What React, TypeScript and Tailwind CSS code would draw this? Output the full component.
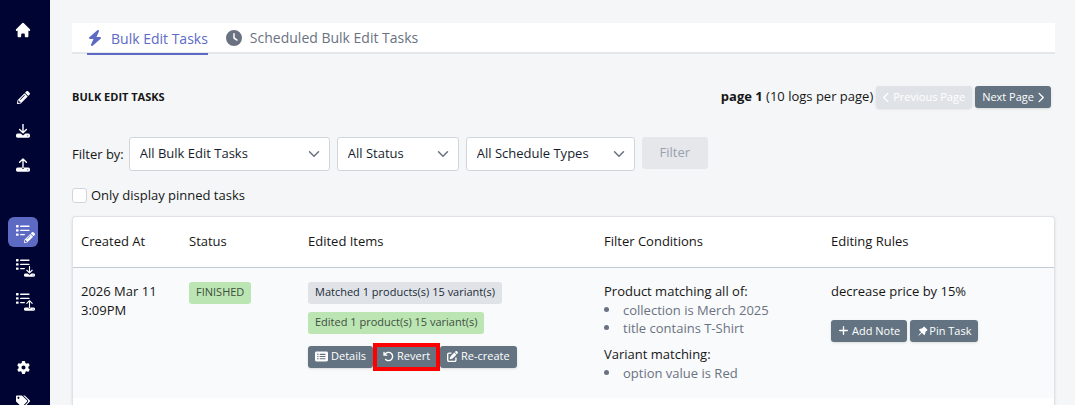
import React from "react";
import clsx from "clsx";
import { FaPencilAlt, FaTags } from "react-icons/fa";
import {
  FaArrowRotateLeft,
  FaBolt,
  FaChevronLeft,
  FaChevronRight,
  FaClock,
  FaGear,
  FaPenToSquare,
  FaPlus,
  FaRectangleList,
} from "react-icons/fa6";
import { HiHome } from "react-icons/hi";
import { AiFillPushpin } from "react-icons/ai";
import { ChevronDown } from "lucide-react";

// arrow over a tray, used for both export (down) and import (up)
function TrayIcon({ up, className }: { up?: boolean; className?: string }) {
  return (
    <svg viewBox="0 0 14 14" className={className} fill="none" stroke="currentColor" aria-hidden="true">
      <path
        d={up ? "M7 10V1M3.6 4.2L7 .9l3.4 3.3" : "M7 .4v8.2M3.6 5.4L7 8.7l3.4-3.3"}
        strokeWidth="1.4"
        strokeLinecap="round"
        strokeLinejoin="round"
      />
      <path
        d={
          up
            ? "M2 9.6h4v1.4h2V9.6h4a2.1 2.1 0 0 1 0 4.2H2a2.1 2.1 0 0 1 0-4.2z"
            : "M2 9.6h2.6L7 11.4l2.4-1.8H12a2.1 2.1 0 0 1 0 4.2H2a2.1 2.1 0 0 1 0-4.2z"
        }
        fill="currentColor"
        stroke="none"
      />
      <circle cx="11.6" cy="11.7" r="0.8" fill="#8589b0" stroke="none" />
    </svg>
  );
}

// task list with a small action icon on its lower right corner
function ListBadgeIcon({ children }: { children: React.ReactNode }) {
  return (
    <span className="relative block size-[14px]">
      <svg viewBox="0 0 14 14" className="size-[14px]" fill="currentColor" aria-hidden="true">
        <rect x="0" y="0" width="2.6" height="2.4" rx="0.6" />
        <rect x="0" y="4.2" width="2.6" height="2.4" rx="0.6" />
        <rect x="0" y="8.4" width="2.6" height="2.4" rx="0.6" />
        <rect x="4" y="0.5" width="9.6" height="1.4" rx="0.7" />
        <rect x="4" y="4.7" width="9.6" height="1.4" rx="0.7" />
        <rect x="4" y="8.9" width="5" height="1.4" rx="0.7" />
      </svg>
      <span className="absolute top-[7px] left-2">{children}</span>
    </span>
  );
}

interface NavItem {
  label: string;
  icon: React.ReactNode;
  active?: boolean;
}

const navGroups: NavItem[][] = [
  [{ label: "Home", icon: <HiHome className="size-[18px]" /> }],
  [
    { label: "Bulk edit", icon: <FaPencilAlt className="size-[13px]" /> },
    { label: "Export", icon: <TrayIcon className="size-[14px]" /> },
    { label: "Import", icon: <TrayIcon up className="size-[14px]" /> },
  ],
  [
    {
      label: "Bulk edit tasks",
      icon: (
        <ListBadgeIcon>
          <FaPencilAlt className="size-[11px]" />
        </ListBadgeIcon>
      ),
      active: true,
    },
    {
      label: "Export tasks",
      icon: (
        <ListBadgeIcon>
          <TrayIcon className="size-[11px]" />
        </ListBadgeIcon>
      ),
    },
    {
      label: "Import tasks",
      icon: (
        <ListBadgeIcon>
          <TrayIcon up className="size-[11px]" />
        </ListBadgeIcon>
      ),
    },
  ],
  [
    { label: "Settings", icon: <FaGear className="size-[13px]" /> },
    { label: "Plans", icon: <FaTags className="size-[14px]" /> },
  ],
];

function Sidebar() {
  return (
    <nav className="flex w-[50px] shrink-0 flex-col gap-[37px] overflow-hidden bg-[#000433] pt-[15px] pl-2">
      {navGroups.map((group, i) => (
        <div key={i} className="flex flex-col gap-1">
          {group.map((item) => (
            <a
              key={item.label}
              href="#"
              aria-label={item.label}
              className={clsx(
                "flex size-[30px] items-center justify-center rounded-md text-white",
                item.active && "bg-[#5c6ac4]"
              )}
            >
              {item.icon}
            </a>
          ))}
        </div>
      ))}
    </nav>
  );
}

interface SmallButtonProps {
  children: React.ReactNode;
  className?: string;
  disabled?: boolean;
}

function SmallButton({ children, className, disabled }: SmallButtonProps) {
  return (
    <button
      type="button"
      disabled={disabled}
      className={clsx(
        "flex h-[22px] items-center gap-[3px] px-[7px] text-[11px] font-medium whitespace-nowrap text-white shadow-sm",
        disabled ? "bg-[#dfe3e8]" : "bg-[#637381]",
        className ?? "rounded-[3px]"
      )}
    >
      {children}
    </button>
  );
}

function FilterSelect({ label, className }: { label: string; className: string }) {
  return (
    <div className={clsx("relative", className)}>
      <select
        aria-label={label}
        className="h-[34px] w-full appearance-none rounded-[3px] border border-[#d2d6dc] bg-white px-2.5 text-[13px] text-[#161e2e]"
      >
        <option>{label}</option>
      </select>
      <ChevronDown className="pointer-events-none absolute top-2 right-[7px] size-[18px] text-gray-500" strokeWidth={2} />
    </div>
  );
}

function Badge({ children, className }: { children: React.ReactNode; className: string }) {
  return (
    <span className={clsx("flex h-[22px] w-fit items-center rounded-[3px] px-[7px] text-[11px] whitespace-nowrap", className)}>
      {children}
    </span>
  );
}

function ConditionList({ items }: { items: string[] }) {
  return (
    <ul className="text-gray-500">
      {items.map((item) => (
        <li
          key={item}
          className="flex items-center gap-3.5 before:size-[5px] before:rounded-full before:bg-gray-500 before:content-['']"
        >
          {item}
        </li>
      ))}
    </ul>
  );
}

function TasksTable() {
  return (
    <div className="mt-[11px] flex-1 rounded-t border border-b-0 border-[#dfe3e8] bg-white shadow-sm">
      <table className="w-full table-fixed border-collapse text-left">
        <thead>
          <tr className="h-[50px] border-b border-[#c4cdd5]">
            <th className="w-[108px] px-2 font-normal">Created At</th>
            <th className="w-[119px] px-2 font-normal">Status</th>
            <th className="w-[296px] px-2 font-normal">Edited Items</th>
            <th className="w-[227px] px-2 font-normal">Filter Conditions</th>
            <th className="px-2 font-normal">Editing Rules</th>
          </tr>
        </thead>
        <tbody>
          <tr className="h-[131px] bg-[#f9fafb] align-top">
            <td className="px-2 pt-[14px] leading-[19px]">2026 Mar 11 3:09PM</td>
            <td className="px-2 pt-[14px]">
              <Badge className="bg-[#bbe5b3] text-[#414f3e]">FINISHED</Badge>
            </td>
            <td className="px-2 pt-[14px]">
              <div className="flex flex-col gap-2">
                <Badge className="bg-[#dfe3e8] text-[#212b36]">Matched 1 products(s) 15 variant(s)</Badge>
                <Badge className="bg-[#bbe5b3] text-[#414f3e]">Edited 1 product(s) 15 variant(s)</Badge>
              </div>
              <div className="mt-3 flex gap-[3px]">
                <SmallButton>
                  <FaRectangleList className="size-[13px]" />
                  Details
                </SmallButton>
                {/* highlighted action */}
                <SmallButton className="outline-4 -outline-offset-1 outline-[#ff0000]">
                  <FaArrowRotateLeft className="size-[11px]" />
                  Revert
                </SmallButton>
                <SmallButton>
                  <FaPenToSquare className="size-[11px]" />
                  Re-create
                </SmallButton>
              </div>
            </td>
            <td className="px-2 pt-[14px] leading-[18px]">
              <p className="leading-[19px]">Product matching all of:</p>
              <ConditionList items={["collection is Merch 2025", "title contains T-Shirt"]} />
              <p className="mt-2 leading-[19px]">Variant matching:</p>
              <ConditionList items={["option value is Red"]} />
            </td>
            <td className="px-2 pt-[14px] leading-[18px]">
              <p className="leading-[19px]">decrease price by 15%</p>
              <div className="mt-[19px] flex gap-[3px]">
                <SmallButton>
                  <FaPlus className="size-[11px]" />
                  Add Note
                </SmallButton>
                <SmallButton>
                  <span className="flex items-center">
                    <AiFillPushpin className="size-[12px]" />
                    Pin Task
                  </span>
                </SmallButton>
              </div>
            </td>
          </tr>
        </tbody>
      </table>
    </div>
  );
}

export default function App() {
  return (
    <div className="flex h-screen overflow-hidden bg-[#f4f6f8] font-['Open_Sans','Noto_Sans',sans-serif] text-[13px] text-[#161616]">
      <Sidebar />
      <main className="flex min-w-0 flex-1 flex-col pt-[23px] pr-5 pl-[22px]">
        {/* tabs */}
        <div className="flex h-[31px] gap-[18px] border-b-2 border-[#e5e7eb] bg-white px-[15px] text-[14px] font-medium">
          <a href="#" className="-mb-[3px] flex items-center gap-2 border-b-2 border-[#5c6ac4] text-[#5c6ac4]">
            <FaBolt className="size-4" />
            Bulk Edit Tasks
          </a>
          <a href="#" className="flex items-center gap-2 text-gray-500">
            <FaClock className="size-4" />
            Scheduled Bulk Edit Tasks
          </a>
        </div>

        <div className="mt-8 flex items-center justify-between pr-1">
          <h1 className="text-[11px] font-bold uppercase">Bulk Edit Tasks</h1>
          <div className="flex h-[22px] items-center gap-[3px]">
            <span>
              <strong>page 1</strong> (10 logs per page)
            </span>
            <SmallButton disabled>
              <FaChevronLeft className="h-[11px] w-[7px]" />
              Previous Page
            </SmallButton>
            <SmallButton>
              Next Page
              <FaChevronRight className="h-[11px] w-[7px]" />
            </SmallButton>
          </div>
        </div>

        {/* filters */}
        <div className="mt-[29px] flex items-start gap-[5px]">
          <span className="leading-[34px]">Filter by:</span>
          <div className="flex items-start gap-[7px]">
            <FilterSelect label="All Bulk Edit Tasks" className="w-[201px]" />
            <FilterSelect label="All Status" className="w-[122px]" />
            <FilterSelect label="All Schedule Types" className="w-[169px]" />
            <button
              type="button"
              disabled
              className="h-8 w-[66px] rounded-[3px] bg-[#e5e7eb] text-gray-400"
            >
              Filter
            </button>
          </div>
        </div>
        <label className="mt-[15px] flex h-[19px] items-center gap-1">
          <input
            type="checkbox"
            className="size-[15px] appearance-none rounded-[3px] border border-[#d2d6dc] bg-white checked:bg-[#5c6ac4]"
          />
          Only display pinned tasks
        </label>

        <TasksTable />
      </main>
    </div>
  );
}
